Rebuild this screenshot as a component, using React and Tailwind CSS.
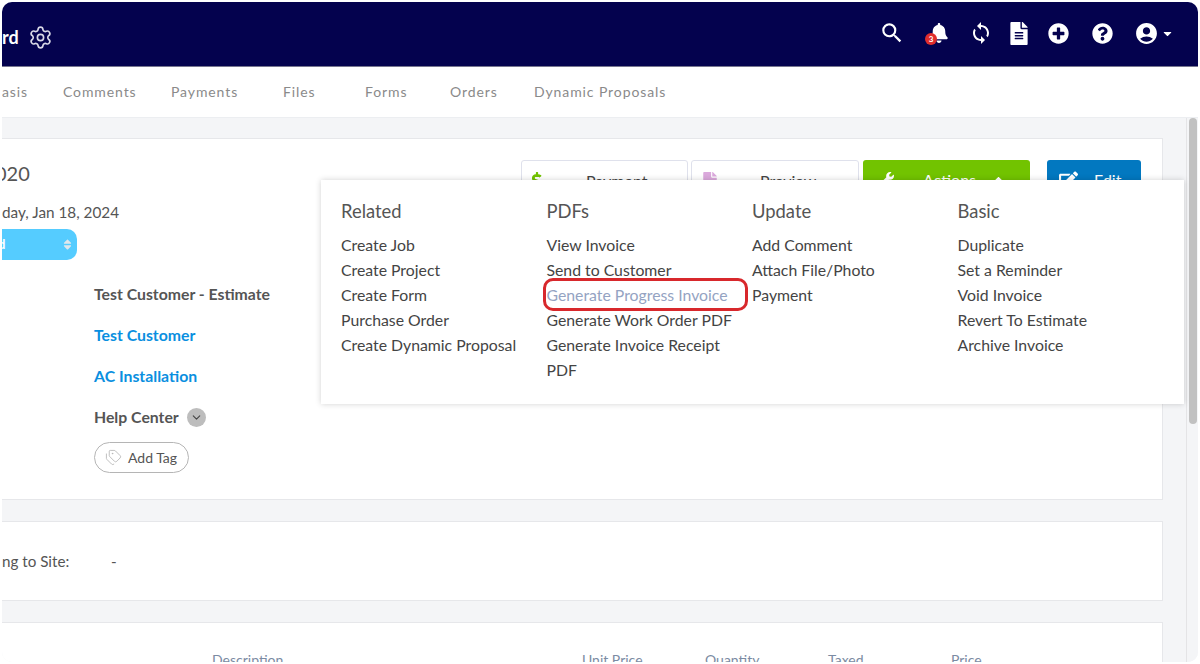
import React from "react";
import { Settings, ChevronDown, Tags } from "lucide-react";
import { MdSearch, MdSync, MdAccountCircle } from "react-icons/md";
import { FaBell, FaFileAlt, FaPlusCircle, FaQuestionCircle, FaCaretDown, FaDollarSign, FaFile, FaWrench, FaEdit, FaCaretUp, FaSort } from "react-icons/fa";

const font = "font-['Lato','Noto_Sans',sans-serif]";

const tabs = [
  ["asis", "w-[61px]"],
  ["Comments", "w-[108px]"],
  ["Payments", "w-[112px]"],
  ["Files", "w-[82px]"],
  ["Forms", "w-[85px]"],
  ["Orders", "w-[84px]"],
  ["Dynamic Proposals", "w-[140px]"],
];

const menu = [
  ["Related", ["Create Job", "Create Project", "Create Form", "Purchase Order", "Create Dynamic Proposal"]],
  ["PDFs", ["View Invoice", "Send to Customer", "Generate Progress Invoice", "Generate Work Order PDF", "Generate Invoice Receipt PDF"]],
  ["Update", ["Add Comment", "Attach File/Photo", "Payment"]],
  ["Basic", ["Duplicate", "Set a Reminder", "Void Invoice", "Revert To Estimate", "Archive Invoice"]],
];

function Header() {
  return (
    <header className="h-[65px] shrink-0 bg-[#04024e] flex items-center justify-between border-b border-[#77768f] text-white">
      <div className="flex items-center gap-[9px] mt-[6px]">
        <span className="text-[18px] font-bold leading-none">rd</span>
        <Settings className="w-[25px] h-[25px] text-[#d9d9e6]" strokeWidth={1.6} />
      </div>
      <div className="flex items-center mr-[24px] -mt-[2px]">
        <MdSearch className="w-[26px] h-[26px]" />
        <div className="relative ml-[25px]">
          <FaBell className="w-[18px] h-[20px]" />
          <span className="absolute -left-[5px] top-[10px] w-[12px] h-[12px] rounded-full bg-[#e02d2d] text-white text-[8px] font-bold leading-[12px] text-center">3</span>
        </div>
        <MdSync className="ml-[21px] w-[24px] h-[24px]" />
        <FaFileAlt className="ml-[17px] w-[18px] h-[23px]" />
        <FaPlusCircle className="ml-[20px] w-[21px] h-[21px]" />
        <FaQuestionCircle className="ml-[23px] w-[21px] h-[21px]" />
        <MdAccountCircle className="ml-[21px] w-[25px] h-[25px]" />
        <FaCaretDown className="ml-[2px] w-[13px] h-[13px]" />
      </div>
    </header>
  );
}

function Tabs() {
  return (
    <nav className="h-[51px] shrink-0 bg-white border-b border-[#eceef1] flex items-center pb-[1px]">
      {tabs.map(([t, w]) => (
        <span key={t} className={`${w} shrink-0 text-[14px] tracking-[0.9px] text-[#8a8a8a] whitespace-nowrap`}>{t}</span>
      ))}
    </nav>
  );
}

function ActionButtons() {
  return (
    <div className="flex items-start h-[40px]">
      <button className="w-[167px] h-[40px] border border-[#dfe1ec] rounded-[3px] bg-white flex pt-[9px] pl-[9px] text-[16px] leading-[22px] text-[#444]">
        <FaDollarSign className="w-[12px] h-[18px] mt-[2px] text-[#72c300]" />
        <span className="ml-[43px]">Payment</span>
      </button>
      <button className="ml-[3px] w-[168px] h-[40px] border border-[#dfe1ec] rounded-[3px] bg-white flex pt-[9px] pl-[11px] text-[16px] leading-[22px] text-[#444]">
        <FaFile className="w-[14px] h-[18px] mt-[2px] text-[#dba9dc]" />
        <span className="ml-[43px]">Preview</span>
      </button>
      <button className="ml-[4px] w-[167px] h-[40px] rounded-[3px] bg-[#72c300] flex pt-[9px] pl-[17px] text-[16px] leading-[22px] text-white">
        <FaWrench className="w-[14px] h-[16px] mt-[2px]" />
        <span className="ml-[29px]">Actions</span>
        <FaCaretUp className="ml-[17px] mt-[4px] w-[11px] h-[11px]" />
      </button>
      <button className="ml-[17px] w-[94px] h-[40px] rounded-[3px] bg-[#0278c0] flex pt-[9px] pl-[12px] text-[16px] leading-[22px] text-white">
        <FaEdit className="w-[19px] h-[18px] mt-[2px]" />
        <span className="ml-[16px]">Edit</span>
      </button>
    </div>
  );
}

function Dropdown() {
  return (
    <div className="absolute left-[319px] top-[178px] w-[863px] h-[224px] bg-white shadow-[0_0_6px_rgba(0,0,0,0.18)] grid grid-cols-[205.5px_205.5px_205.5px_1fr] pl-[20px] pt-[19px]">
      {menu.map(([title, items]) => (
        <div key={title}>
          <h3 className="text-[18.4px] leading-[24px] text-[#555] mb-[9px]">{title}</h3>
          <ul className="text-[15.8px] leading-[25.1px] text-[#444] w-[190px]">
            {items.map((i) => (
              <li key={i} className={i === "Generate Progress Invoice" ? "text-[#94a3c2]" : ""}>{i}</li>
            ))}
          </ul>
        </div>
      ))}
      <div className="absolute left-[222px] top-[98px] w-[205px] h-[33px] rounded-[10px] border-[3px] border-[#d8282c]" />
    </div>
  );
}

function Summary() {
  return (
    <section className="h-[362px] shrink-0 bg-white border-y border-r border-[#e6e7ea] pr-[21px] pt-[20px] text-[#555]">
      <div className="flex justify-between">
        <div>
          <div className="text-[20px] leading-[28px] -ml-[7px] text-[#555]">020</div>
          <div className="mt-[15px] text-[15.3px] leading-[20px]">day, Jan 18, 2024</div>
          <div className="mt-[7px] w-[75px] h-[31px] rounded-r-[10px] bg-[#55ccff] flex items-center justify-between pr-[5px] text-white text-[13px] font-bold">
            <span className="-ml-[4px]">d</span>
            <FaSort className="w-[9px] h-[13px] text-[#dfe7ec]" />
          </div>
        </div>
        <div className="mt-[1px]">
          <ActionButtons />
        </div>
      </div>
      <div className="ml-[92px] mt-[22px] text-[15.8px] font-bold">
        <div className="leading-[24px]">Test Customer - Estimate</div>
        <div className="mt-[17px] leading-[24px] text-[#0a8fe0]">Test Customer</div>
        <div className="mt-[17px] leading-[24px] text-[#0a8fe0]">AC Installation</div>
        <div className="mt-[17px] leading-[24px] flex items-center">
          Help Center
          <span className="ml-[8px] w-[19px] h-[19px] rounded-full bg-[#bdbdbd] flex items-center justify-center">
            <ChevronDown className="w-[13px] h-[13px] text-[#444]" />
          </span>
        </div>
        <div className="mt-[13px] w-[95px] h-[31px] rounded-full border border-[#b5b5b5] flex items-center pl-[10px] text-[14px] font-normal">
          <Tags className="w-[17px] h-[17px] text-[#b5b5b5]" strokeWidth={1.2} />
          <span className="ml-[6px]">Add Tag</span>
        </div>
      </div>
    </section>
  );
}

function Site() {
  return (
    <section className="mt-[21px] h-[80px] shrink-0 bg-white border-y border-r border-[#e6e7ea] flex items-center text-[15.2px] text-[#555]">
      <span className="w-[109px]">ng to Site:</span>
      <span>-</span>
    </section>
  );
}

function Items() {
  const cols = [
    ["Description", "ml-[210px] w-[370px]"],
    ["Unit Price", "w-[123px]"],
    ["Quantity", "w-[123px]"],
    ["Taxed", "w-[123px]"],
    ["Price", ""],
  ];
  return (
    <section className="mt-[21px] h-[60px] shrink-0 bg-white border-y border-r border-[#e6e7ea] flex pt-[28px] text-[14px] text-[#7b8ba3]">
      {cols.map(([t, c]) => <span key={t} className={`${c} leading-[18px]`}>{t}</span>)}
    </section>
  );
}

export default function App() {
  return (
    <div className={`w-[1200px] h-[664px] bg-white p-[2px] overflow-hidden ${font}`}>
      <div className="relative w-full h-full rounded-[10px] overflow-hidden bg-[#f4f5f7] flex flex-col">
        <Header />
        <Tabs />
        <div className="flex-1 min-h-0 flex">
          <main className="w-[1161px] shrink-0 pt-[20px] flex flex-col overflow-hidden">
            <Summary />
            <Site />
            <Items />
          </main>
          <div className="ml-auto w-[12px] bg-[#f4f5f7] border-l border-[#e4e4e6] pl-[2px]">
            <div className="w-[8px] h-[306px] rounded-[4px] bg-[#c1c1c1]" />
          </div>
        </div>
        <Dropdown />
      </div>
    </div>
  );
}
